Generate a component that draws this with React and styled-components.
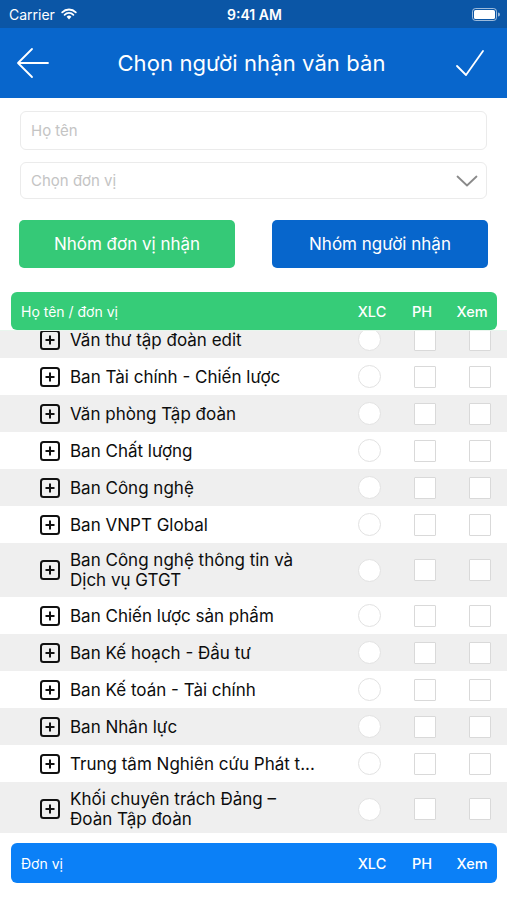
import React from 'react';
import styled, { createGlobalStyle } from 'styled-components';

const GlobalStyle = createGlobalStyle`
  html, body {
    margin: 0;
    padding: 0;
    background: #fff;
  }
  body {
    font-family: Inter, "Noto Sans", "Liberation Sans", sans-serif;
    -webkit-font-smoothing: antialiased;
  }
  * { box-sizing: border-box; }
`;

const Page = styled.div`
  width: 507px;
  height: 900px;
  display: flex;
  flex-direction: column;
  background: #fff;
  overflow: hidden;
`;

const StatusBar = styled.div`
  height: 28px;
  background: #0b56a6;
  color: #fff;
  display: grid;
  grid-template-columns: 1fr auto 1fr;
  align-items: center;
  padding: 0 7px 0 9px;
  font-size: 14px;
  .left { display: flex; align-items: center; gap: 6px; }
  .time { font-weight: 600; }
  .right { display: flex; justify-content: flex-end; }
`;

const NavBar = styled.div`
  height: 70px;
  background: #0866cc;
  color: #fff;
  display: flex;
  align-items: center;
  justify-content: space-between;
  padding: 0 20px 0 16px;
  h1 {
    margin: 0;
    font-size: 22px;
    font-weight: 400;
    letter-spacing: 0.1px;
  }
`;

const IconButton = styled.div`
  width: 34px;
  height: 34px;
  display: flex;
  align-items: center;
  justify-content: center;
`;

const Form = styled.div`
  padding: 13px 20px 0 20px;
  display: flex;
  flex-direction: column;
  gap: 12px;
`;

const Field = styled.div`
  height: ${p => p.$h}px;
  border: 1px solid #ebebeb;
  border-radius: 6px;
  display: flex;
  align-items: center;
  justify-content: space-between;
  padding: 0 8px 0 10px;
  color: #c4c4c4;
  font-size: 15px;
`;

const Buttons = styled.div`
  display: grid;
  grid-template-columns: 216px 216px;
  justify-content: space-between;
  padding: 21px 19px 0 19px;
`;

const GroupButton = styled.div`
  height: 48px;
  border-radius: 5px;
  background: ${p => p.$bg};
  color: #fff;
  font-size: 17px;
  display: flex;
  align-items: center;
  justify-content: center;
`;

const TableBar = styled.div`
  margin: ${p => p.$margin};
  height: ${p => p.$h}px;
  background: ${p => p.$bg};
  border-radius: 6px;
  color: #fff;
  font-size: 14px;
  display: flex;
  align-items: center;
  padding-left: 10px;
  .title { flex: 1; }
`;

const BarCell = styled.div`
  width: 50px;
  text-align: center;
  font-weight: 500;
  font-size: 14.5px;
`;

const ListViewport = styled.div`
  flex: 1;
  overflow: hidden;
  border-top: 1px solid #e9f6ee;
`;

const List = styled.div`
  margin-top: -10px;
`;

const Row = styled.div`
  min-height: 37px;
  display: flex;
  align-items: center;
  padding: 7px 0 7px 40px;
  background: ${p => (p.$odd ? '#ffffff' : '#efefef')};
`;

const Name = styled.div`
  flex: 1;
  padding: 0 24px 0 10px;
  font-size: 17px;
  line-height: 20px;
  color: #0d0d0d;
`;

const Cell = styled.div`
  width: 55px;
  display: flex;
  justify-content: center;
`;

const Radio = styled.div`
  width: 23px;
  height: 23px;
  border-radius: 50%;
  border: 1px solid #e2e2e2;
  background: #fff;
`;

const Check = styled.div`
  width: 22px;
  height: 22px;
  border: 1px solid #d9d9d9;
  border-radius: 1px;
  background: #fff;
`;

const PlusBox = () => (
  <svg width="20" height="20" viewBox="0 0 20 20">
    <rect x="1" y="1" width="18" height="18" rx="2.5" fill="none" stroke="#111" strokeWidth="2" />
    <path d="M10 5.5v9M5.5 10h9" stroke="#111" strokeWidth="2" />
  </svg>
);

const rows = [
  'Văn thư tập đoàn edit',
  'Ban Tài chính - Chiến lược',
  'Văn phòng Tập đoàn',
  'Ban Chất lượng',
  'Ban Công nghệ',
  'Ban VNPT Global',
  'Ban Công nghệ thông tin và Dịch vụ GTGT',
  'Ban Chiến lược sản phẩm',
  'Ban Kế hoạch - Đầu tư',
  'Ban Kế toán - Tài chính',
  'Ban Nhân lực',
  'Trung tâm Nghiên cứu Phát t...',
  'Khối chuyên trách Đảng – Đoàn Tập đoàn',
];

export default function App() {
  return (
    <Page>
      <GlobalStyle />
      <StatusBar>
        <div className="left">
          <span>Carrier</span>
          <svg width="16" height="12" viewBox="0 0 16 12">
            <path d="M8 11.5 L5.6 8.8 A3.4 3.4 0 0 1 10.4 8.8 Z" fill="#fff" />
            <path d="M3.6 6.8 A6.2 6.2 0 0 1 12.4 6.8" fill="none" stroke="#fff" strokeWidth="1.8" strokeLinecap="round" />
            <path d="M1.2 4.3 A9.6 9.6 0 0 1 14.8 4.3" fill="none" stroke="#fff" strokeWidth="1.8" strokeLinecap="round" />
          </svg>
        </div>
        <span className="time">9:41 AM</span>
        <div className="right">
          <svg width="28" height="13" viewBox="0 0 28 13">
            <rect x="0.5" y="0.5" width="24" height="12" rx="3" fill="none" stroke="#fff" strokeOpacity="0.6" />
            <rect x="2" y="2" width="21" height="9" rx="1.6" fill="#fff" />
            <path d="M26 4.5v4a2 2 0 0 0 0-4z" fill="#fff" fillOpacity="0.6" />
          </svg>
        </div>
      </StatusBar>

      <NavBar>
        <IconButton>
          <svg width="34" height="32" viewBox="0 0 34 32">
            <path d="M32 16H3M16 2L2 16l14 14" fill="none" stroke="#fff" strokeWidth="1.8" strokeLinecap="round" strokeLinejoin="round" />
          </svg>
        </IconButton>
        <h1>Chọn người nhận văn bản</h1>
        <IconButton>
          <svg width="30" height="30" viewBox="0 0 30 30">
            <path d="M2 18l9 9L28 3" fill="none" stroke="#fff" strokeWidth="1.8" strokeLinecap="round" strokeLinejoin="round" />
          </svg>
        </IconButton>
      </NavBar>

      <Form>
        <Field $h={39}>Họ tên</Field>
        <Field $h={37}>
          <span>Chọn đơn vị</span>
          <svg width="22" height="12" viewBox="0 0 22 12">
            <path d="M1.5 1.5l9.5 9 9.5-9" fill="none" stroke="#8a8a8a" strokeWidth="1.8" strokeLinecap="round" strokeLinejoin="round" />
          </svg>
        </Field>
      </Form>

      <Buttons>
        <GroupButton $bg="#35c977">Nhóm đơn vị nhận</GroupButton>
        <GroupButton $bg="#0766cc">Nhóm người nhận</GroupButton>
      </Buttons>

      <TableBar $bg="#36cc78" $h={38} $margin="24px 10px 0 11px">
        <span className="title">Họ tên / đơn vị</span>
        <BarCell>XLC</BarCell>
        <BarCell>PH</BarCell>
        <BarCell>Xem</BarCell>
      </TableBar>

      <ListViewport>
        <List>
          {rows.map((name, i) => (
            <Row key={name} $odd={i % 2 === 1}>
              <PlusBox />
              <Name>{name}</Name>
              <Cell><Radio /></Cell>
              <Cell><Check /></Cell>
              <Cell><Check /></Cell>
            </Row>
          ))}
        </List>
      </ListViewport>

      <TableBar $bg="#0b80f7" $h={40} $margin="10px 10px 17px 11px">
        <span className="title">Đơn vị</span>
        <BarCell>XLC</BarCell>
        <BarCell>PH</BarCell>
        <BarCell>Xem</BarCell>
      </TableBar>
    </Page>
  );
}
